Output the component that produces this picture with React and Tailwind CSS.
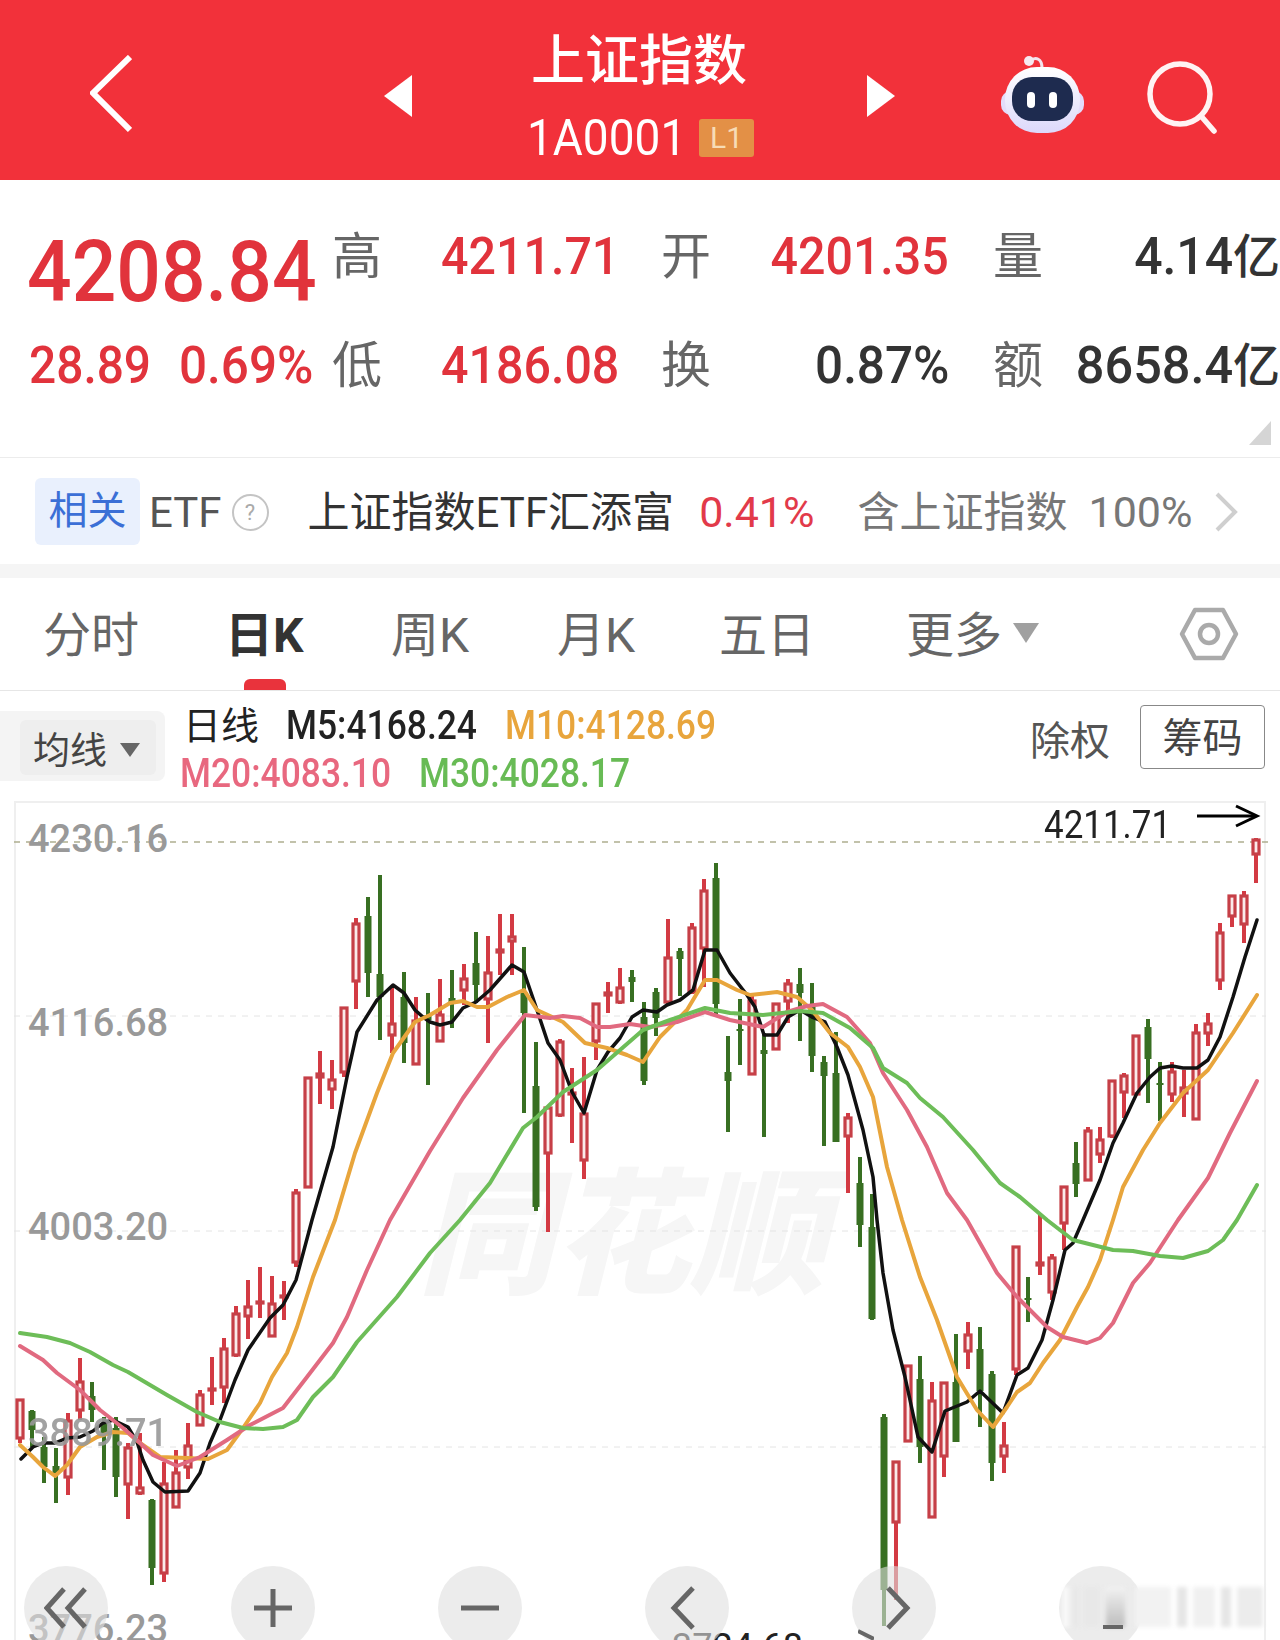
const candles = [
  ['r',1399,1399,1439,1443],['g',1410,1411,1430,1447],['g',1437,1447,1467,1483],['g',1448,1466,1473,1503],
  ['r',1413,1420,1478,1495],['r',1358,1381,1411,1420],['g',1382,1396,1410,1422],['g',1417,1423,1433,1470],
  ['g',1417,1428,1477,1497],['r',1443,1447,1485,1519],['r',1433,1487,1494,1495],['g',1499,1500,1568,1585],
  ['r',1462,1483,1574,1582],['r',1450,1472,1508,1508],['r',1423,1445,1468,1479],['r',1390,1394,1426,1426],
  ['r',1357,1388,1391,1405],['r',1338,1348,1388,1403],['r',1306,1313,1356,1357],['r',1280,1306,1317,1339],
  ['r',1267,1301,1304,1318],['r',1276,1303,1337,1337],['r',1281,1295,1298,1320],['r',1189,1192,1263,1267],
  ['r',1077,1077,1188,1188],['r',1051,1073,1078,1104],['r',1060,1079,1090,1109],['r',1007,1007,1073,1077],
  ['r',918,923,982,1009],['g',897,916,973,997],['g',875,974,997,1040],['r',987,1023,1036,1053],
  ['g',972,997,1043,1063],['r',997,1020,1065,1065],['g',993,1015,1020,1085],['r',979,1014,1042,1042],
  ['g',970,998,1003,1028],['r',964,978,991,1005],['g',932,963,985,1003],['r',936,972,1000,1043],
  ['r',914,949,953,975],['r',914,936,942,975],['g',947,992,1013,1113],['g',1042,1086,1207,1211],
  ['r',1107,1107,1154,1232],['r',1039,1041,1116,1117],['r',1068,1092,1094,1143],['r',1057,1113,1161,1179],
  ['r',1003,1003,1042,1060],['r',982,992,996,1013],['r',968,987,1003,1004],['g',970,977,982,1002],
  ['g',1002,1017,1081,1085],['g',988,992,1018,1036],['r',919,957,1003,1004],['g',948,951,959,996],
  ['r',923,927,993,994],['r',879,890,949,987],['g',863,878,1004,1017],['g',1036,1072,1081,1132],
  ['g',999,1029,1031,1065],['r',993,1000,1075,1075],['g',1033,1050,1054,1137],['r',1003,1003,1050,1050],
  ['r',979,983,1002,1023],['g',968,984,993,1041],['g',983,1007,1056,1072],['g',1056,1062,1076,1146],
  ['g',1032,1073,1142,1142],['r',1113,1117,1137,1193],['g',1157,1183,1225,1247],['g',1194,1227,1319,1320],
  ['g',1414,1417,1590,1626],['r',1461,1461,1523,1600],['r',1365,1365,1442,1442],['g',1356,1379,1447,1463],
  ['r',1382,1400,1518,1518],['r',1382,1382,1457,1477],['g',1334,1382,1442,1442],['r',1322,1334,1352,1369],
  ['g',1327,1349,1391,1427],['g',1371,1374,1463,1481],['r',1422,1445,1457,1473],['r',1246,1246,1370,1375],
  ['g',1277,1298,1300,1322],['r',1215,1262,1266,1275],['r',1254,1257,1293,1300],['r',1186,1186,1224,1250],
  ['g',1142,1163,1184,1197],['r',1127,1130,1181,1181],['r',1127,1139,1155,1163],['r',1080,1080,1137,1138],
  ['r',1073,1075,1093,1118],['r',1035,1035,1095,1095],['g',1019,1027,1059,1103],['g',1062,1083,1085,1121],
  ['r',1062,1071,1095,1102],['r',1070,1087,1094,1117],['r',1024,1032,1120,1120],['r',1013,1023,1034,1046],
  ['r',923,932,981,990],['r',895,895,917,927],['r',891,895,925,943],['r',838,839,855,883],
];

const m5 = '21,1459 33,1447 43,1443 55,1443 67,1438 80,1437 93,1431 103,1423 113,1420 128,1427 137,1442 143,1460 153,1482 165,1492 188,1491 200,1473 210,1443 220,1420 235,1380 248,1350 270,1318 283,1305 296,1280 312,1220 333,1147 347,1077 357,1032 377,1000 393,985 404,993 415,1010 423,1017 430,1022 440,1025 452,1022 463,1008 476,1002 490,990 512,965 524,972 537,1010 548,1043 560,1060 572,1092 584,1113 597,1070 608,1052 620,1038 632,1017 643,1010 657,1012 667,1005 680,1000 693,990 705,950 717,950 730,973 747,995 755,1007 764,1035 777,1035 788,1017 800,1010 812,1017 825,1022 837,1047 848,1075 863,1130 873,1177 877,1220 883,1273 893,1330 905,1377 918,1437 932,1452 945,1411 967,1402 980,1391 1003,1413 1017,1375 1028,1368 1042,1340 1053,1300 1065,1250 1073,1243 1083,1220 1100,1180 1113,1143 1123,1123 1137,1093 1150,1077 1160,1068 1172,1066 1183,1068 1197,1068 1208,1060 1220,1037 1233,997 1245,957 1257,920';
const m10 = '20,1445 33,1457 43,1467 55,1476 67,1465 80,1447 97,1437 113,1432 128,1433 140,1443 160,1457 187,1458 208,1459 227,1450 243,1428 260,1403 272,1377 287,1353 297,1327 313,1277 335,1220 355,1153 377,1093 393,1053 415,1022 430,1015 450,1003 463,1001 477,1007 488,1007 507,997 524,990 537,1010 563,1022 585,1043 607,1048 627,1055 643,1062 660,1037 687,1010 705,980 717,980 737,990 750,995 777,992 797,997 812,1010 830,1033 848,1047 860,1067 873,1097 887,1167 902,1220 920,1277 937,1320 957,1377 977,1410 993,1427 1007,1407 1017,1392 1030,1383 1043,1363 1060,1340 1077,1307 1088,1287 1100,1260 1113,1220 1123,1187 1143,1150 1160,1123 1183,1093 1208,1070 1233,1033 1257,995';
const m20 = '20,1346 43,1360 57,1373 80,1390 100,1410 123,1428 140,1443 153,1455 177,1466 200,1457 227,1440 250,1425 283,1408 307,1377 333,1343 347,1317 367,1270 390,1220 430,1151 463,1098 497,1050 525,1015 550,1018 563,1016 580,1018 597,1027 610,1027 630,1024 650,1027 677,1022 705,1012 730,1020 763,1027 787,1012 807,1006 823,1004 847,1017 870,1043 883,1073 907,1110 927,1147 947,1193 967,1220 997,1273 1017,1297 1047,1327 1063,1337 1087,1343 1100,1338 1113,1323 1133,1283 1150,1263 1178,1220 1208,1178 1230,1133 1257,1081';
const m30 = '20,1333 47,1337 70,1343 90,1352 113,1365 128,1372 167,1395 197,1412 220,1422 243,1428 263,1429 283,1427 297,1420 313,1397 333,1377 357,1342 397,1297 430,1253 460,1220 490,1183 523,1128 537,1117 563,1092 597,1070 620,1050 643,1030 670,1020 705,1008 730,1013 763,1015 800,1011 823,1013 850,1028 873,1048 883,1068 907,1083 920,1098 943,1117 973,1150 1000,1183 1020,1197 1047,1220 1073,1240 1113,1250 1133,1251 1160,1256 1183,1258 1208,1251 1223,1240 1237,1220 1257,1185';

function Candle({ c, x }) {
  const [type, hi, top, bot, lo] = c;
  if (type === 'g') {
    return (
      <g fill="#386f22">
        <rect x={x - 2} y={hi} width="4" height={lo - hi} />
        <rect x={x - 3.5} y={top} width="7" height={Math.max(bot - top, 2)} />
      </g>
    );
  }
  return (
    <g>
      <rect x={x - 2} y={hi} width="4" height={lo - hi} fill="#d33a43" />
      <rect x={x - 3} y={top + 1} width="6" height={Math.max(bot - top - 2, 1)} fill="#fbeaea" stroke="#c63f47" strokeWidth="3.2" />
    </g>
  );
}

function RobotIcon() {
  return (
    <svg width="88" height="80" viewBox="0 0 88 80" className="mt-[10px]">
      <defs>
        <linearGradient id="shell" x1="0" y1="0" x2="0" y2="1">
          <stop offset="0" stopColor="#ffffff" />
          <stop offset="1" stopColor="#dcd8fb" />
        </linearGradient>
      </defs>
      <path d="M30 6 C36 1 42 4 42 13" fill="none" stroke="#f3e4ee" strokeWidth="3" />
      <circle cx="29" cy="6" r="5" fill="#f6e9f0" />
      <rect x="1" y="36" width="83" height="24" rx="10" fill="#e3dcfb" />
      <rect x="5" y="12" width="75" height="66" rx="32" fill="url(#shell)" />
      <rect x="12" y="22" width="61" height="44" rx="20" fill="#1e2b4f" />
      <rect x="27" y="37" width="8" height="16" rx="4" fill="#fff" />
      <rect x="49" y="37" width="8" height="16" rx="4" fill="#fff" />
    </svg>
  );
}

function Label({ children }) {
  return <div className="text-[50px] leading-[48px] text-[#666] -ml-[1px]">{children}</div>;
}

function NavCircle({ children }) {
  return (
    <div className="w-[84px] h-[84px] rounded-full bg-[#dfdfdf]/60 shrink-0 flex items-center justify-center">
      {children}
    </div>
  );
}

const tabClass = 'text-[48px] leading-[54px] text-[#666] whitespace-nowrap';
const statClass = 'inline-block text-[52px] font-medium leading-[48px] whitespace-nowrap';
const legendClass = 'inline-block origin-left scale-x-[.885] text-[40px] leading-[44px] font-medium whitespace-nowrap';
const axisClass = 'absolute left-[28px] text-[38px] leading-[44px] font-medium text-[#999]';

export default function App() {
  return (
    <div className="w-[1280px] h-[1640px] overflow-hidden bg-white flex flex-col [font-family:Roboto,'Noto_Sans_CJK_SC',sans-serif]">
      {/* title bar */}
      <header className="h-[180px] shrink-0 bg-[#f2313a] flex items-center pl-[90px] text-white">
        <svg width="42" height="78" viewBox="0 0 42 78" className="mt-[8px]" fill="none" stroke="#fff" strokeWidth="6">
          <polyline points="40,2 3,38 40,75" />
        </svg>
        <svg width="28" height="42" viewBox="0 0 28 42" className="ml-[252px] mt-[12px]">
          <polygon points="28,0 0,21 28,42" fill="#fff" />
        </svg>
        <div className="ml-[119px] w-[216px] self-start pt-[35px] flex flex-col">
          <div className="text-[54px] leading-[54px] font-medium whitespace-nowrap">上证指数</div>
          <div className="mt-[30px] flex items-center h-[38px] -ml-[4px]">
            <span className="inline-block w-[172px] shrink-0 origin-left scale-x-[.92] text-[50px] leading-[38px]">1A0001</span>
            <span className="w-[55px] shrink-0 h-[38px] rounded-[3px] bg-[#e39046] text-[#f7dcb6] text-[30px] leading-[38px] text-center">L1</span>
          </div>
        </div>
        <svg width="28" height="42" viewBox="0 0 28 42" className="ml-[120px] mt-[12px]">
          <polygon points="0,0 28,21 0,42" fill="#fff" />
        </svg>
        <div className="ml-[105px]"><RobotIcon /></div>
        <svg width="72" height="78" viewBox="0 0 72 78" className="ml-[59px] mt-[20px]" fill="none" stroke="#fff3f3" strokeWidth="5.5" strokeLinecap="round">
          <circle cx="33" cy="33" r="30" />
          <line x1="54" y1="55" x2="67" y2="70" />
        </svg>
      </header>

      {/* quote */}
      <section className="h-[278px] shrink-0 relative border-b border-[#ececec] pt-[53px] pl-[29px]">
        <div className="grid grid-cols-[304px_108px_221px_109px_178px_45px_286px] grid-rows-[48px_48px] gap-y-[61px]">
          <div className="text-[86px] leading-[80px] -mt-[1px] -ml-[2px] font-medium text-[#e1333c] origin-left scale-x-[.913] whitespace-nowrap">4208.84</div>
          <Label>高</Label>
          <div><span className={`${statClass} origin-left scale-x-[.93] text-[#e1333c]`}>4211.71</span></div>
          <Label>开</Label>
          <div className="flex justify-end"><span className={`${statClass} shrink-0 origin-right scale-x-[.93] text-[#e1333c]`}>4201.35</span></div>
          <div />
          <div className="flex">
            <Label>量</Label>
            <div className="ml-auto flex items-center text-[#333]">
              <span className={`${statClass} origin-right scale-x-[.96]`}>4.14</span>
              <span className="text-[47px] leading-[48px] font-medium">亿</span>
            </div>
          </div>

          <div className="flex text-[#e1333c] whitespace-nowrap">
            <span className={`${statClass} w-[150px] shrink-0 origin-left scale-x-[.92]`}>28.89</span>
            <span className={`${statClass} origin-left scale-x-[.95]`}>0.69%</span>
          </div>
          <Label>低</Label>
          <div><span className={`${statClass} origin-left scale-x-[.93] text-[#e1333c]`}>4186.08</span></div>
          <Label>换</Label>
          <div className="flex justify-end"><span className={`${statClass} shrink-0 origin-right scale-x-[.95] text-[#333]`}>0.87%</span></div>
          <div />
          <div className="flex">
            <Label>额</Label>
            <div className="ml-auto flex items-center text-[#333]">
              <span className={`${statClass} origin-right scale-x-[.97]`}>8658.4</span>
              <span className="text-[47px] leading-[48px] font-medium">亿</span>
            </div>
          </div>
        </div>
        <svg width="22" height="24" viewBox="0 0 22 24" className="absolute right-[9px] bottom-[12px]">
          <polygon points="22,0 22,24 0,24" fill="#d5d5d5" />
        </svg>
      </section>

      {/* related ETF */}
      <section className="h-[106px] shrink-0 flex items-center pl-[35px] whitespace-nowrap">
        <div className="w-[105px] h-[67px] rounded-[6px] bg-[#e9f0fd] text-[#3b6fd6] text-[39px] leading-[67px] text-center">相关</div>
        <span className="ml-[9px] mt-[3px] text-[42px] text-[#555]">ETF</span>
        <div className="ml-[10px] mt-[3px] w-[37px] h-[37px] rounded-full border-2 border-[#c4c4c4] text-[#aaa] text-[22px] leading-[33px] text-center">?</div>
        <span className="ml-[39px] mt-[3px] text-[42px] text-[#333]">上证指数ETF汇添富</span>
        <span className="ml-[25px] mt-[3px] text-[43px] text-[#e23a4a]">0.41%</span>
        <span className="ml-[43px] mt-[3px] text-[42px] text-[#777]">含上证指数</span>
        <span className="ml-[21px] mt-[3px] text-[43px] text-[#777]">100%</span>
        <svg width="24" height="40" viewBox="0 0 24 40" className="ml-[22px] mt-[1px]" fill="none" stroke="#cfcfcf" strokeWidth="4">
          <polyline points="3,2 21,20 3,38" />
        </svg>
      </section>
      <div className="h-[14px] shrink-0 bg-[#f5f5f5]" />

      {/* period tabs */}
      <nav className="h-[113px] shrink-0 border-b border-[#e6e6e6] flex items-center pl-[43px] relative">
        <div className={`w-[185px] mt-[3px] ${tabClass}`}>分时</div>
        <div className="w-[163px] relative h-full flex items-center">
          <span className="text-[48px] leading-[54px] font-bold text-[#333] -ml-[3px] mt-[3px]">日K</span>
          <div className="absolute left-[16px] bottom-0 w-[42px] h-[11px] rounded-t-[6px] bg-[#e9333c]" />
        </div>
        <div className={`w-[166px] mt-[3px] ${tabClass}`}>周K</div>
        <div className={`w-[162px] mt-[3px] ${tabClass}`}>月K</div>
        <div className={`w-[187px] mt-[3px] ${tabClass}`}>五日</div>
        <div className={`mt-[3px] ${tabClass}`}>更多</div>
        <svg width="26" height="20" viewBox="0 0 26 20" className="ml-[11px] -mt-[2px]">
          <polygon points="0,0 26,0 13,20" fill="#a0a0a0" />
        </svg>
        <svg width="60" height="56" viewBox="0 0 60 56" className="ml-[140px]" fill="none" stroke="#aaa" strokeWidth="4.5" strokeLinejoin="round">
          <polygon points="3,28 16,4 44,4 57,28 44,52 16,52" />
          <circle cx="30" cy="28" r="9" />
        </svg>
      </nav>

      {/* moving averages */}
      <section className="h-[110px] shrink-0 flex pt-[14px] relative">
        <div className="w-[165px] h-[70px] mt-[6px] bg-[#f4f4f4] rounded-r-[8px] pt-[9px] pl-[20px]">
          <div className="w-[136px] h-[55px] bg-[#eeeeee] rounded-[6px] flex items-center pl-[13px] pt-[8px]">
            <span className="text-[37px] leading-[44px] text-[#444]">均线</span>
            <svg width="20" height="14" viewBox="0 0 20 14" className="ml-[13px] -mt-[3px]">
              <polygon points="0,0 20,0 10,14" fill="#666" />
            </svg>
          </div>
        </div>
        <div className="ml-[18px] flex flex-col">
          <div className="flex text-[#222] -mt-[1px]">
            <span className="w-[103px] shrink-0 text-[38px] leading-[44px] whitespace-nowrap">日线</span>
            <span className={`w-[219px] shrink-0 ${legendClass}`}>M5:4168.24</span>
            <span className={`w-[210px] shrink-0 ${legendClass} text-[#e8a53c]`}>M10:4128.69</span>
          </div>
          <div className="flex mt-[4px]">
            <span className={`-ml-[3px] w-[239px] shrink-0 ${legendClass} text-[#e8687f]`}>M20:4083.10</span>
            <span className={`w-[210px] shrink-0 ${legendClass} text-[#68bb55]`}>M30:4028.17</span>
          </div>
        </div>
        <div className="ml-auto flex items-start pr-[15px]">
          <span className="text-[40px] leading-[50px] mt-[12px] text-[#555]">除权</span>
          <div className="ml-[30px] w-[125px] h-[64px] border border-[#888] rounded-[4px] text-[40px] leading-[66px] text-center text-[#444]">筹码</div>
        </div>
      </section>

      {/* k line */}
      <section className="relative flex-1 overflow-hidden">
        <div className="absolute left-[14px] top-0 w-[1252px] h-[850px] border-2 border-[#efefef]" />
        <div className="absolute left-[418px] top-[368px] text-[136px] leading-[136px] font-black italic text-[#f6f6f6] whitespace-nowrap">同花顺</div>
        <svg width="1280" height="839" viewBox="0 801 1280 839" className="absolute left-0 top-0">
          <line x1="14" y1="842" x2="1268" y2="842" stroke="#aeae90" strokeWidth="1.5" strokeDasharray="6 6" />
          <line x1="14" y1="1016" x2="1266" y2="1016" stroke="#e4e4e4" strokeDasharray="6 6" />
          <line x1="14" y1="1231" x2="1266" y2="1231" stroke="#e4e4e4" strokeDasharray="6 6" />
          <line x1="14" y1="1447" x2="1266" y2="1447" stroke="#e4e4e4" strokeDasharray="6 6" />
          {candles.map((c, i) => <Candle key={i} c={c} x={20 + 12 * i} />)}
          <g fill="none" strokeLinejoin="round" strokeLinecap="round">
            <polyline points={m5} stroke="#111" strokeWidth="3.5" />
            <polyline points={m10} stroke="#e8a53c" strokeWidth="4" />
            <polyline points={m20} stroke="#e16a80" strokeWidth="4" />
            <polyline points={m30} stroke="#6dbd58" strokeWidth="4" />
          </g>
          <g fill="none" stroke="#000" strokeWidth="3">
            <line x1="1197" y1="816" x2="1256" y2="816" />
            <polyline points="1236,806 1257,816 1236,826" />
          </g>
        </svg>

        <div className={`${axisClass} top-[16px]`}>4230.16</div>
        <div className={`${axisClass} top-[200px]`}>4116.68</div>
        <div className={`${axisClass} top-[404px]`}>4003.20</div>
        <div className={`${axisClass} top-[610px] opacity-90`}>3889.71</div>
        <div className={`${axisClass} top-[806px]`}>3776.23</div>
        <div className="absolute left-[1044px] top-[2px] origin-left scale-x-[.92] text-[38px] leading-[44px] text-[#222]">4211.71</div>
        <div className="absolute left-[672px] top-[824px] text-[36px] leading-[44px] text-[#222]">3724.68</div>

        <div className="absolute left-[24px] top-[765px] flex gap-[123px]">
          <NavCircle>
            <svg width="44" height="44" viewBox="0 0 44 44" fill="none" stroke="#666" strokeWidth="5">
              <polyline points="20,3 3,22 20,41" />
              <polyline points="41,3 24,22 41,41" />
            </svg>
          </NavCircle>
          <NavCircle>
            <svg width="40" height="40" viewBox="0 0 40 40" stroke="#666" strokeWidth="5">
              <line x1="1" y1="20" x2="39" y2="20" />
              <line x1="20" y1="1" x2="20" y2="39" />
            </svg>
          </NavCircle>
          <NavCircle>
            <svg width="40" height="6" viewBox="0 0 40 6" stroke="#666" strokeWidth="5">
              <line x1="1" y1="3" x2="39" y2="3" />
            </svg>
          </NavCircle>
          <NavCircle>
            <svg width="26" height="44" viewBox="0 0 26 44" fill="none" stroke="#666" strokeWidth="5" className="-ml-[8px]">
              <polyline points="23,2 4,22 23,42" />
            </svg>
          </NavCircle>
          <NavCircle>
            <svg width="26" height="44" viewBox="0 0 26 44" fill="none" stroke="#666" strokeWidth="5" className="ml-[8px]">
              <polyline points="3,2 22,22 3,42" />
            </svg>
          </NavCircle>
          <NavCircle />
        </div>

        {/* blurred-out picture mark */}
        <div className="absolute left-[1063px] top-[786px] h-[40px] flex gap-[6px] blur-[2px]">
          <div className="w-[14px] bg-gradient-to-r from-white to-[#e2e2e2]" />
          <div className="w-[17px] bg-[#e8e8e8]" />
          <div className="w-[19px] bg-gradient-to-b from-[#f2f2f2] to-[#bdbdbd]" />
          <div className="w-[36px] bg-[#f2f2f2] ml-[4px]" />
          <div className="w-[10px] bg-[#e6e6e6]" />
          <div className="w-[22px] bg-[#f0f0f0]" />
          <div className="w-[10px] bg-[#e6e6e6]" />
          <div className="w-[26px] bg-[#ececec]" />
        </div>
        <svg width="22" height="4" viewBox="0 0 22 4" className="absolute left-[1103px] top-[824px]" fill="#666">
          <rect width="20" height="4" />
        </svg>
        <svg width="16" height="12" viewBox="0 0 16 12" className="absolute left-[858px] top-[828px]" fill="none" stroke="#666" strokeWidth="4">
          <line x1="0" y1="2" x2="16" y2="10" />
        </svg>
      </section>
    </div>
  );
}
